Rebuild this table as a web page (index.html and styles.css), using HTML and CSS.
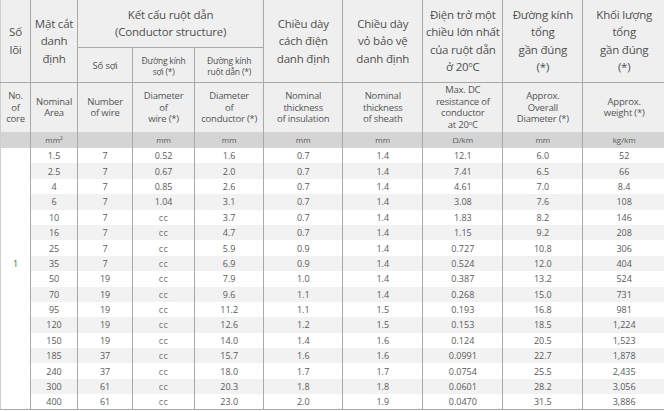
FILE: index.html
```html
<!DOCTYPE html>
<html lang="vi">
<head>
<meta charset="utf-8">
<title>Cable specification</title>
<link rel="stylesheet" href="styles.css">
</head>
<body>
<table class="spec">
  <colgroup>
    <col class="c1"><col class="c2"><col class="c3"><col class="c4"><col class="c5">
    <col class="c6"><col class="c7"><col class="c8"><col class="c9"><col class="c10">
  </colgroup>
  <thead>
    <tr class="h-vi">
      <th rowspan="2">Số<br>lõi</th>
      <th rowspan="2">Mặt cắt<br>danh<br>định</th>
      <th colspan="3" class="group">Kết cấu ruột dẫn<br>(Conductor structure)</th>
      <th rowspan="2">Chiều dày<br>cách điện<br>danh định</th>
      <th rowspan="2">Chiều dày<br>vỏ bảo vệ<br>danh định</th>
      <th rowspan="2">Điện trở một<br>chiều lớn nhất<br>của ruột dẫn<br>ở 20<sup>o</sup>C</th>
      <th rowspan="2">Đường kính<br>tổng<br>gần đúng<br>(*)</th>
      <th rowspan="2">Khối lượng<br>tổng<br>gần đúng<br>(*)</th>
    </tr>
    <tr class="h-sub">
      <th class="sub-main">Số sợi</th>
      <th>Đường kính<br>sợi (*)</th>
      <th>Đường kính<br>ruột dẫn (*)</th>
    </tr>
    <tr class="h-en">
      <th>No.<br>of<br>core</th>
      <th>Nominal<br>Area</th>
      <th>Number<br>of wire</th>
      <th>Diameter<br>of<br>wire (*)</th>
      <th>Diameter<br>of<br>conductor (*)</th>
      <th>Nominal<br>thickness<br>of insulation</th>
      <th>Nominal<br>thickness<br>of sheath</th>
      <th>Max. DC<br>resistance of<br>conductor<br>at 20<sup>o</sup>C</th>
      <th>Approx.<br>Overall<br>Diameter (*)</th>
      <th>Approx.<br>weight (*)</th>
    </tr>
    <tr class="h-unit">
      <th></th>
      <th>mm<sup>2</sup></th>
      <th></th>
      <th>mm</th>
      <th>mm</th>
      <th>mm</th>
      <th>mm</th>
      <th>Ω/km</th>
      <th>mm</th>
      <th>kg/km</th>
    </tr>
  </thead>
  <tbody>
    <tr><td class="core"></td><td>1.5</td><td>7</td><td>0.52</td><td>1.6</td><td>0.7</td><td>1.4</td><td>12.1</td><td>6.0</td><td>52</td></tr>
    <tr><td class="core"></td><td>2.5</td><td>7</td><td>0.67</td><td>2.0</td><td>0.7</td><td>1.4</td><td>7.41</td><td>6.5</td><td>66</td></tr>
    <tr><td class="core"></td><td>4</td><td>7</td><td>0.85</td><td>2.6</td><td>0.7</td><td>1.4</td><td>4.61</td><td>7.0</td><td>8.4</td></tr>
    <tr><td class="core"></td><td>6</td><td>7</td><td>1.04</td><td>3.1</td><td>0.7</td><td>1.4</td><td>3.08</td><td>7.6</td><td>108</td></tr>
    <tr><td class="core"></td><td>10</td><td>7</td><td class="cc">cc</td><td>3.7</td><td>0.7</td><td>1.4</td><td>1.83</td><td>8.2</td><td>146</td></tr>
    <tr><td class="core"></td><td>16</td><td>7</td><td class="cc">cc</td><td>4.7</td><td>0.7</td><td>1.4</td><td>1.15</td><td>9.2</td><td>208</td></tr>
    <tr><td class="core"></td><td>25</td><td>7</td><td class="cc">cc</td><td>5.9</td><td>0.9</td><td>1.4</td><td>0.727</td><td>10.8</td><td>306</td></tr>
    <tr><td class="core">1</td><td>35</td><td>7</td><td class="cc">cc</td><td>6.9</td><td>0.9</td><td>1.4</td><td>0.524</td><td>12.0</td><td>404</td></tr>
    <tr><td class="core"></td><td>50</td><td>19</td><td class="cc">cc</td><td>7.9</td><td>1.0</td><td>1.4</td><td>0.387</td><td>13.2</td><td>524</td></tr>
    <tr><td class="core"></td><td>70</td><td>19</td><td class="cc">cc</td><td>9.6</td><td>1.1</td><td>1.4</td><td>0.268</td><td>15.0</td><td>731</td></tr>
    <tr><td class="core"></td><td>95</td><td>19</td><td class="cc">cc</td><td>11.2</td><td>1.1</td><td>1.5</td><td>0.193</td><td>16.8</td><td>981</td></tr>
    <tr><td class="core"></td><td>120</td><td>19</td><td class="cc">cc</td><td>12.6</td><td>1.2</td><td>1.5</td><td>0.153</td><td>18.5</td><td>1,224</td></tr>
    <tr><td class="core"></td><td>150</td><td>19</td><td class="cc">cc</td><td>14.0</td><td>1.4</td><td>1.6</td><td>0.124</td><td>20.5</td><td>1,523</td></tr>
    <tr><td class="core"></td><td>185</td><td>37</td><td class="cc">cc</td><td>15.7</td><td>1.6</td><td>1.6</td><td>0.0991</td><td>22.7</td><td>1,878</td></tr>
    <tr><td class="core"></td><td>240</td><td>37</td><td class="cc">cc</td><td>18.0</td><td>1.7</td><td>1.7</td><td>0.0754</td><td>25.5</td><td>2,435</td></tr>
    <tr><td class="core"></td><td>300</td><td>61</td><td class="cc">cc</td><td>20.3</td><td>1.8</td><td>1.8</td><td>0.0601</td><td>28.2</td><td>3,056</td></tr>
    <tr><td class="core"></td><td>400</td><td>61</td><td class="cc">cc</td><td>23.0</td><td>2.0</td><td>1.9</td><td>0.0470</td><td>31.5</td><td>3,886</td></tr>
  </tbody>
</table>
</body>
</html>
```

FILE: styles.css
```css
html, body {
  margin: 0;
  padding: 0;
  background: #ffffff;
}

.spec {
  border-collapse: collapse;
  table-layout: fixed;
  width: 665px;
  font-family: "Open Sans", "DejaVu Sans", sans-serif;
  color: #4d4d4d;
  border-left: 1px solid #cfcfcf;
  border-bottom: 1px solid #a9a9a9;
}

.c1 { width: 30px; }
.c2 { width: 47px; }
.c3 { width: 55px; }
.c4 { width: 62px; }
.c5 { width: 69px; }
.c6 { width: 79px; }
.c7 { width: 80px; }
.c8 { width: 80px; }
.c9 { width: 80px; }
.c10 { width: 82px; }

.spec th,
.spec td {
  padding: 0;
  text-align: center;
  border-left: 1px solid #a9a9a9;
  font-weight: normal;
}

.spec th:first-child,
.spec td:first-child {
  border-left: none;
}

.spec thead th {
  background: #efefef;
}

.spec sup {
  font-size: 0.6em;
  line-height: 0;
  vertical-align: 0.6em;
}

/* Vietnamese main header */
.h-vi th {
  font-size: 11.5px;
  line-height: 17.5px;
  color: #505050;
  letter-spacing: -0.2px;
  border-bottom: 1px solid #a9a9a9;
}

.h-vi {
  height: 47px;
}

.h-vi th.group {
  vertical-align: middle;
}

/* Sub-header under conductor structure */
.h-sub {
  height: 35px;
}

.h-sub th {
  font-size: 8.5px;
  line-height: 11.5px;
  color: #505050;
  letter-spacing: -0.2px;
  border-bottom: 1px solid #a9a9a9;
  border-top: 1px solid #a9a9a9;
  padding-top: 3px;
}

.h-sub th.sub-main {
  border-left: 1px solid #a9a9a9;
  font-size: 9.5px;
}

/* English header */
.h-en {
  height: 50px;
}

.h-en th {
  font-size: 9.5px;
  line-height: 11.5px;
  color: #555555;
  letter-spacing: -0.2px;
}

/* Units row */
.h-unit {
  height: 16px;
}

.h-unit th {
  background: #d4d4d4 !important;
  font-size: 8px;
  line-height: 10px;
  color: #595959;
}

/* Data */
.spec tbody tr {
  height: 15.4px;
}

.spec tbody td {
  font-size: 9px;
  line-height: 11px;
  color: #5a5a5a;
}

.spec tbody tr:nth-child(even) td {
  background: #f2f2f2;
}

.spec tbody td.core {
  background: #ffffff !important;
  border-left: none;
}

.spec td.cc {
  font-size: 9px;
  letter-spacing: 0.6px;
  color: #777777;
}
```
